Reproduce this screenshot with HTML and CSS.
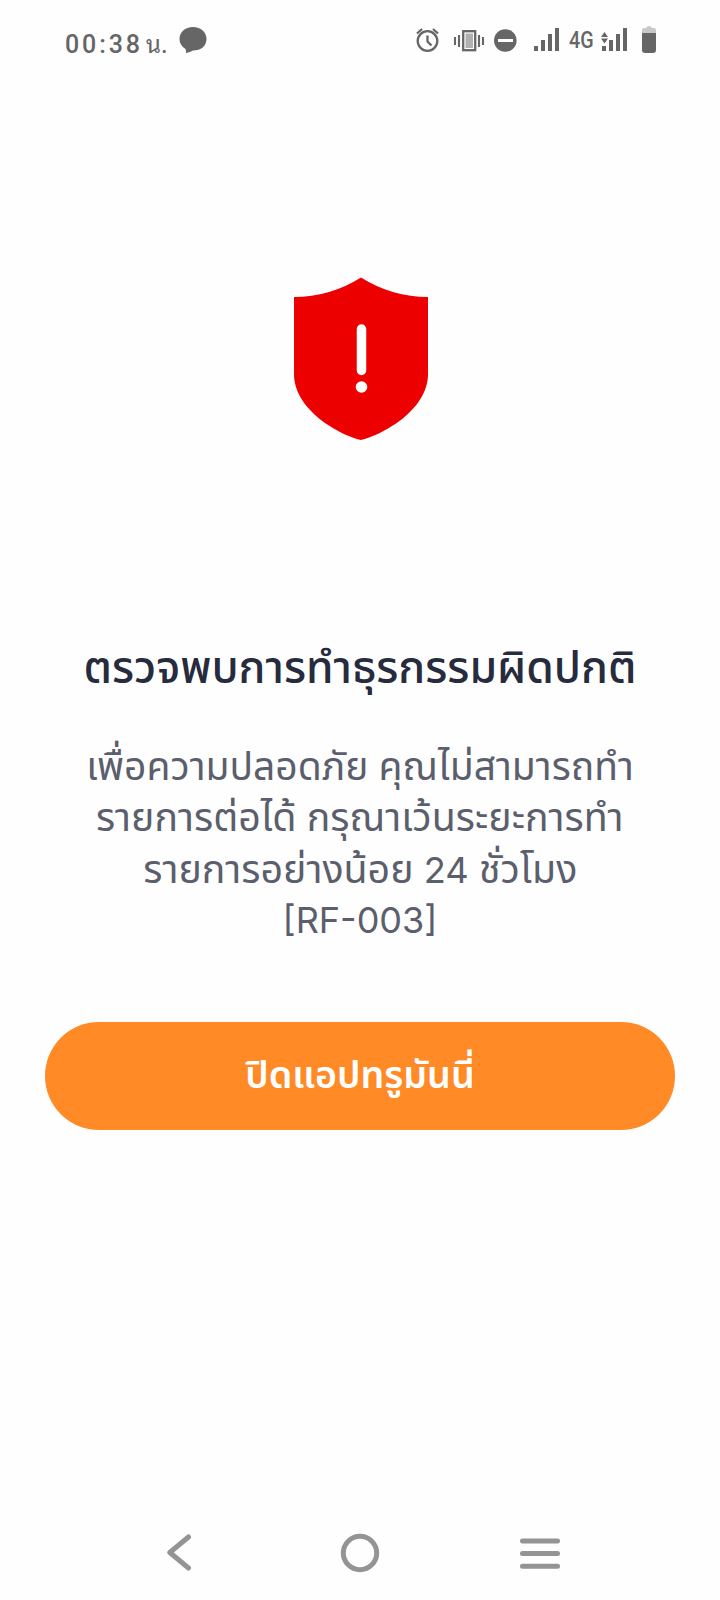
FILE: index.html
```html
<!DOCTYPE html>
<html lang="th">
<head>
<meta charset="utf-8">
<title>ตรวจพบการทำธุรกรรมผิดปกติ</title>
<link rel="stylesheet" href="styles.css">
</head>
<body>
<div class="screen">
  <header class="status">
    <div class="status-left">
      <span class="clock"><span class="digits">00:38</span><span class="unit">น.</span></span>
      <svg class="bubble" width="28" height="28" viewBox="0 0 28 28"><path d="M14 0C6 0 .5 5 .5 12c0 4 2 7.500 6 10 .5 1.500.5 2.500.5 4 3-.5 5-1.500 7-2.500C22 23.500 27.500 19 27.500 12S22 0 14 0z" fill="#666"/></svg>
    </div>
    <div class="status-right">
      <svg class="icons" width="125" height="32" viewBox="410 24 125 32" fill="none" stroke="#666">
        <circle cx="427.500" cy="41" r="9.800" stroke-width="2.300"/>
        <path d="M427.500 35.500v6l4 4M417 33.500l5-4.500M438 33.500l-5-4.500" stroke-width="2.300"/>
        <rect x="463.200" y="31.200" width="12" height="19" stroke-width="2.300"/>
        <rect x="465.500" y="33.500" width="7.500" height="14.500" fill="#b0b0b0" stroke="none"/>
        <path d="M455 37v8M459 35v12M479 35v12M483 37v8" stroke-width="2.100"/>
        <circle cx="505.300" cy="40.500" r="11.300" fill="#666" stroke="none"/>
        <path d="M498 40.500h15" stroke="#fff" stroke-width="3"/>
      </svg>
      <svg class="signal" width="26" height="24" viewBox="0 0 26 24" fill="#666"><path d="M0 18h4v5H0zM7 12h4v11H7zM14 6h4v17h-4zM21 0h4v23h-4z"/></svg>
      <span class="net">4G</span>
      <svg class="signal2" width="27" height="24" viewBox="0 0 27 24" fill="#666"><path d="M1 18h4v5H1zM8 12h4v11H8zM15 6h4v17h-4zM22 0h4v23h-4zM0 9l3.500-5L7 9zM0 10.500h7l-3.500 5z"/></svg>
      <svg class="battery" width="14" height="27" viewBox="0 0 14 27"><path d="M0 7V4q0-2 2-2h2q1-2 3-2t3 2h2q2 0 2 2v3z" fill="#c8c8c8"/><path d="M0 7h14v17q0 3-3 3H3q-3 0-3-3z" fill="#666"/></svg>
    </div>
  </header>

  <main class="content">
    <svg class="shield" width="136" height="164" viewBox="0 0 136 164">
      <path d="M68 .5Q99 20 135 20V97C135 134 87 159 68 163 49 159 1 134 1 97V20Q37 20 68 .5z" fill="#ec0000"/>
      <path d="M68.500 52v41.500" stroke="#fff" stroke-width="9.500" stroke-linecap="round"/>
      <circle cx="68.500" cy="110" r="5.800" fill="#fff"/>
    </svg>
    <h1 class="title">ตรวจพบการทำธุรกรรมผิดปกติ</h1>
    <p class="message">
      <span class="line l1">เพื่อความปลอดภัย คุณไม่สามารถทำ</span>
      <span class="line l2">รายการต่อได้ กรุณาเว้นระยะการทำ</span>
      <span class="line l3">รายการอย่างน้อย <span class="latin">24</span> ชั่วโมง</span>
      <span class="line l4 latin">[RF-003]</span>
    </p>
    <button class="close" type="button">ปิดแอปทรูมันนี่</button>
  </main>

  <nav class="navbar">
    <svg width="26" height="38" viewBox="0 0 26 38"><path d="M21.500 3L2.800 18.500l18.700 15.500" fill="none" stroke="#949494" stroke-width="5" stroke-linecap="round" stroke-linejoin="round"/></svg>
    <svg class="home" width="40" height="40" viewBox="0 0 40 40"><circle cx="20" cy="20" r="16.700" fill="none" stroke="#949494" stroke-width="5"/></svg>
    <svg width="40" height="32" viewBox="0 0 40 32"><path d="M2.500 4h35M2.500 16.500h35M2.500 29.200h35" fill="none" stroke="#949494" stroke-width="5" stroke-linecap="round"/></svg>
  </nav>
</div>
</body>
</html>
```
FILE: styles.css
```css
* { box-sizing: border-box; }
body { margin: 0; background: #fefefe; font-family: "Noto Sans Thai", "Noto Sans Thai UI", "Roboto", sans-serif; }
svg { display: block; flex: none; }
.screen { height: 1600px; display: flex; flex-direction: column; overflow: hidden; }
.status { height: 80px; flex: none; display: flex; justify-content: space-between; padding: 0 64px; color: #666; }
.status-left { display: flex; align-items: flex-start; }
.clock { display: flex; align-items: baseline; width: 115px; height: 56px; padding-top: 26px; line-height: 32px; white-space: nowrap; }
.digits { font: 550 25px/32px Roboto, sans-serif; letter-spacing: 2.900px; width: 82px; padding-left: 1px; }
.unit { font-family: "Noto Sans Thai Looped", "Loma", "Noto Serif Thai", "Noto Sans Thai", sans-serif; font-size: 24px; }
.bubble { margin-top: 27px; }
.status-right { display: flex; align-items: flex-start; padding-top: 24px; margin-right: -8px; }
.icons { margin-right: -1px; }
.signal { margin: 4px 9px 0 0; }
.net { font: 500 24px/32px Roboto, sans-serif; width: 32px; display: block; transform: scaleX(.82); transform-origin: left; }
.signal2 { margin-top: 4px; }
.battery { margin: 2px 8px 0 14px; }
.content { flex: 1; display: flex; flex-direction: column; align-items: center; padding: 197px 45px 0; }
.shield { margin-left: 2px; }
.title { margin: 199px 0 0; height: 60px; font-size: 44.400px; line-height: 60px; font-weight: 550; color: #272b3e; white-space: nowrap; }
.message { margin: 43px 0 0; font-size: 39px; line-height: 51px; font-weight: 390; color: #5b5e6c; display: flex; flex-direction: column; align-items: center; white-space: nowrap; }
.close { margin-top: 75px; width: 630px; height: 108px; border: 0; border-radius: 54px; background: #ff8a26; color: #fff; font: 600 37.600px/51px "Noto Sans Thai", Roboto, sans-serif; white-space: nowrap; }
.line { display: block; height: 51px; }
.l2, .l3 { transform: scaleX(1.008); }
.latin { font-family: Inter, Roboto, sans-serif; font-size: 36px; font-weight: 380; }
.l4 { position: relative; top: -1px; }
.navbar { height: 96px; flex: none; display: flex; align-items: center; justify-content: space-between; padding: 2px 160px 0 167px; }
.home { margin-left: 6px; }
```
